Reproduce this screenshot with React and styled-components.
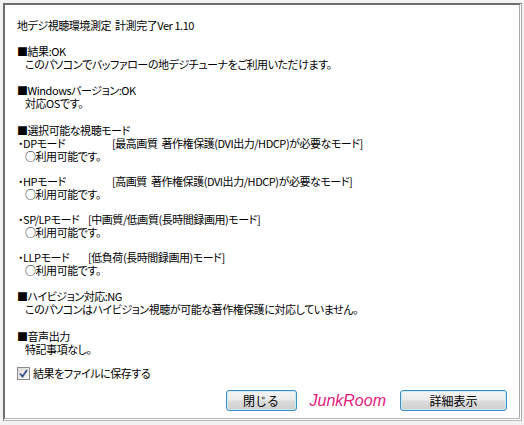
import React from 'react';
import styled, { createGlobalStyle } from 'styled-components';

const GlobalStyle = createGlobalStyle`
  html, body {
    margin: 0;
    padding: 0;
    background: #f4f4f4;
  }
`;

const Window = styled.div`
  width: 524px;
  height: 425px;
  box-sizing: border-box;
  padding: 3px 2px 4px 3px;
  background: #f2f2f2;
`;

const Panel = styled.div`
  height: 100%;
  box-sizing: border-box;
  background: #fff;
  border-top: 2px solid #6e6e6e;
  border-left: 2px solid #6e6e6e;
  border-right: 3px double #a9a9a9;
  border-bottom: 3px double #b8b8b8;
  padding: 14px 12px 0 12px;
  font-family: "Noto Sans CJK JP", sans-serif;
  font-size: 11px;
  font-feature-settings: "palt";
  letter-spacing: -0.45px;
  line-height: 13px;
  color: #000;
`;

const Section = styled.div`
  margin-top: ${(p) => p.$gap || 0}px;
`;

const Line = styled.div`
  white-space: pre;
  padding-left: ${(p) => (p.$indent ? 8 : 0)}px;
`;

const ModeRow = styled.div`
  display: flex;
  white-space: pre;
  padding-left: 1px;
`;

const ModeLabel = styled.span`
  min-width: ${(p) => p.$width}px;
  flex: none;
`;

const CheckRow = styled.label`
  display: flex;
  align-items: center;
  gap: 3px;
  margin-top: 11px;
`;

const CheckBox = styled.span`
  width: 11px;
  height: 11px;
  border: 1px solid #8a8a8a;
  background: linear-gradient(135deg, #dcdcdc, #f8f8f8);
  display: flex;
  align-items: center;
  justify-content: center;
`;

const ButtonRow = styled.div`
  display: flex;
  justify-content: flex-end;
  align-items: center;
  margin-top: 10px;
`;

const Button = styled.button`
  width: ${(p) => p.$width}px;
  height: 21px;
  box-sizing: border-box;
  border: 1px solid #3f8dbf;
  border-radius: 3px;
  background: linear-gradient(#f4f4f4 0%, #ebebeb 48%, #dcdcdc 52%, #cfcfcf 100%);
  box-shadow: inset 0 0 0 1px #c8ecf8;
  font-family: "Noto Sans CJK JP", sans-serif;
  font-size: 12px;
  color: #000;
  padding: 0;
  line-height: 18px;
`;

const Brand = styled.span`
  font-family: "Liberation Sans", sans-serif;
  font-style: italic;
  font-size: 16px;
  letter-spacing: 0;
  color: #e5207e;
  margin: 0 14px 0 13px;
`;

const modes = [
  { label: '・DPモード', w: 94, desc: '[最高画質  著作権保護(DVI出力/HDCP)が必要なモード]', gap: 0 },
  { label: '・HPモード', w: 94, desc: '[高画質  著作権保護(DVI出力/HDCP)が必要なモード]', gap: 12 },
  { label: '・SP/LPモード', w: 70, desc: '[中画質/低画質(長時間録画用)モード]', gap: 12 },
  { label: '・LLPモード', w: 70, desc: '[低負荷(長時間録画用)モード]', gap: 12 },
];

export default function App() {
  return (
    <>
      <GlobalStyle />
      <Window>
        <Panel>
          <Line>地デジ視聴環境測定  計測完了Ver 1.10</Line>

          <Section $gap={13}>
            <Line>■結果:OK</Line>
            <Line $indent>このパソコンでバッファローの地デジチューナをご利用いただけます。</Line>
          </Section>

          <Section $gap={13}>
            <Line>■Windowsバージョン:OK</Line>
            <Line $indent>対応OSです。</Line>
          </Section>

          <Section $gap={14}>
            <Line>■選択可能な視聴モード</Line>
          </Section>
          {modes.map((m) => (
            <Section key={m.label} $gap={m.gap}>
              <ModeRow>
                <ModeLabel $width={m.w}>{m.label}</ModeLabel>
                <span>{m.desc}</span>
              </ModeRow>
              <Line $indent>○利用可能です。</Line>
            </Section>
          ))}

          <Section $gap={13}>
            <Line>■ハイビジョン対応:NG</Line>
            <Line $indent>このパソコンはハイビジョン視聴が可能な著作権保護に対応していません。</Line>
          </Section>

          <Section $gap={14}>
            <Line>■音声出力</Line>
            <Line $indent>特記事項なし。</Line>
          </Section>

          <CheckRow>
            <CheckBox>
              <svg width="9" height="9" viewBox="0 0 9 9">
                <path d="M1 4.5 L3.5 7.5 L8 1" fill="none" stroke="#3b4f8c" strokeWidth="1.8" />
              </svg>
            </CheckBox>
            <span>結果をファイルに保存する</span>
          </CheckRow>

          <ButtonRow>
            <Button $width={71}>閉じる</Button>
            <Brand>JunkRoom</Brand>
            <Button $width={107}>詳細表示</Button>
          </ButtonRow>
        </Panel>
      </Window>
    </>
  );
}
